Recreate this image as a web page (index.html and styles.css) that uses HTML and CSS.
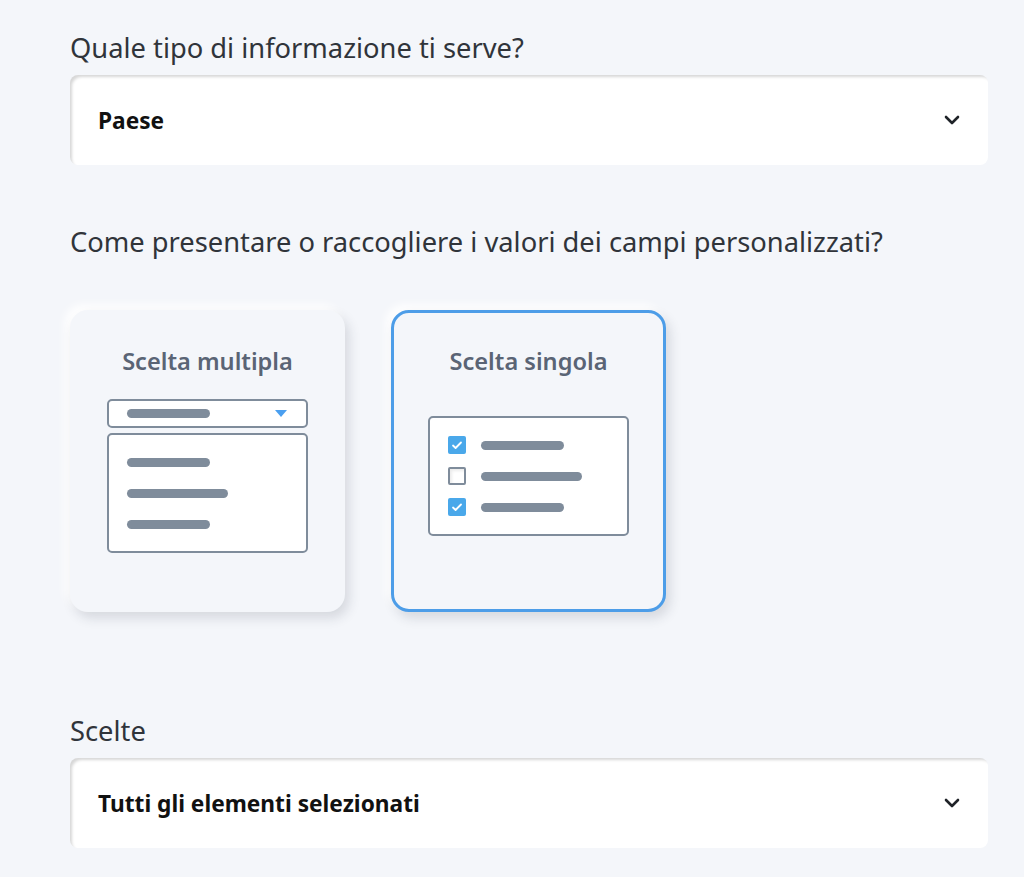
FILE: index.html
```html
<!DOCTYPE html>
<html lang="it">
<head>
    <meta charset="UTF-8">
    <meta name="viewport" content="width=device-width, initial-scale=1.0">
    <title>Campo personalizzato</title>
    <link rel="stylesheet" href="styles.css">
</head>
<body>
    <div class="form">
        <label class="field-label">Quale tipo di informazione ti serve?</label>
        <div class="select">
            <span class="select-value">Paese</span>
            <svg class="chevron" width="16" height="10" viewBox="0 0 16 10"><path d="M2 2l6 6 6-6" fill="none" stroke="#1f2328" stroke-width="2.6" stroke-linecap="round" stroke-linejoin="round"/></svg>
        </div>

        <label class="field-label question">Come presentare o raccogliere i valori dei campi personalizzati?</label>
        <div class="cards">
            <div class="card">
                <h3 class="card-title">Scelta multipla</h3>
                <div class="card-art">
                    <div class="mini-dropdown">
                        <span class="bar short"></span>
                        <span class="caret"></span>
                    </div>
                    <div class="mini-list">
                        <span class="bar short"></span>
                        <span class="bar long"></span>
                        <span class="bar short"></span>
                    </div>
                </div>
            </div>
            <div class="card active">
                <h3 class="card-title">Scelta singola</h3>
                <div class="card-art">
                    <div class="mini-checks">
                        <div class="check-row"><span class="box checked"><svg width="18" height="18" viewBox="0 0 18 18"><path d="M5 9.5l2.6 2.5L13 6.5" fill="none" stroke="#fff" stroke-width="1.8" stroke-linecap="round" stroke-linejoin="round"/></svg></span><span class="bar short"></span></div>
                        <div class="check-row"><span class="box"></span><span class="bar long"></span></div>
                        <div class="check-row"><span class="box checked"><svg width="18" height="18" viewBox="0 0 18 18"><path d="M5 9.5l2.6 2.5L13 6.5" fill="none" stroke="#fff" stroke-width="1.8" stroke-linecap="round" stroke-linejoin="round"/></svg></span><span class="bar short"></span></div>
                    </div>
                </div>
            </div>
        </div>

        <label class="field-label choices">Scelte</label>
        <div class="select">
            <span class="select-value">Tutti gli elementi selezionati</span>
            <svg class="chevron" width="16" height="10" viewBox="0 0 16 10"><path d="M2 2l6 6 6-6" fill="none" stroke="#1f2328" stroke-width="2.6" stroke-linecap="round" stroke-linejoin="round"/></svg>
        </div>
    </div>
</body>
</html>
```

FILE: styles.css
```css
body {
    margin: 0;
    background-color: #f4f6fa;
    font-family: "Noto Sans", "Open Sans", sans-serif;
    color: #2f3237;
}

.form {
    margin-left: 70px;
    width: 918px;
    padding-top: 31px;
}

.field-label {
    display: block;
    font-size: 27.3px;
    line-height: 34px;
    color: #30343a;
    margin-bottom: 10px;
}

.question {
    margin-top: 60px;
    margin-bottom: 51px;
}

.choices {
    margin-top: 102px;
}

.select {
    height: 90px;
    box-sizing: border-box;
    background: #fff;
    border-radius: 8px;
    box-shadow: inset 3px 3px 3px -1px rgba(0, 0, 0, 0.16);
    display: flex;
    align-items: center;
    justify-content: space-between;
    padding: 0 28px 0 28px;
}

.select-value {
    font-size: 22.7px;
    font-weight: bold;
    color: #111;
}

.cards {
    display: flex;
    gap: 46px;
}

.card {
    width: 275px;
    height: 302px;
    box-sizing: border-box;
    border: 3px solid transparent;
    border-radius: 18px;
    background: #f4f6fa;
    box-shadow: 4px 6px 12px rgba(40, 50, 70, 0.15), -5px -5px 10px #fff;
    display: flex;
    flex-direction: column;
    align-items: center;
    padding-top: 33px;
}

.card.active {
    border-color: #4d9de8;
}

.card-title {
    margin: 0;
    font-size: 23.6px;
    line-height: 30px;
    font-weight: 600;
    color: #5a6475;
}

.card-art {
    margin-top: 23px;
    height: 154px;
    display: flex;
    flex-direction: column;
    justify-content: center;
    gap: 5px;
}

.bar {
    display: block;
    height: 9px;
    border-radius: 5px;
    background: #7f8c9b;
}

.bar.short { width: 83px; }
.bar.long { width: 101px; }

.mini-dropdown {
    width: 201px;
    height: 29px;
    box-sizing: border-box;
    border: 2px solid #7f8c9b;
    border-radius: 5px;
    background: #fff;
    display: flex;
    align-items: center;
    justify-content: space-between;
    padding: 0 19px 0 18px;
}

.caret {
    width: 0;
    height: 0;
    border-left: 6px solid transparent;
    border-right: 6px solid transparent;
    border-top: 7px solid #4a9ff0;
}

.mini-list {
    width: 201px;
    height: 120px;
    box-sizing: border-box;
    border: 2px solid #7f8c9b;
    border-radius: 5px;
    background: #fff;
    display: flex;
    flex-direction: column;
    justify-content: center;
    gap: 22px;
    padding-left: 18px;
}

.mini-checks {
    width: 201px;
    height: 120px;
    box-sizing: border-box;
    border: 2px solid #7f8c9b;
    border-radius: 5px;
    background: #fff;
    display: flex;
    flex-direction: column;
    justify-content: center;
    gap: 13px;
    padding-left: 18px;
}

.check-row {
    display: flex;
    align-items: center;
    gap: 15px;
}

.box {
    width: 18px;
    height: 18px;
    box-sizing: border-box;
    border: 2px solid #7f8c9b;
    border-radius: 2px;
    background: #fff;
    box-shadow: inset 2px 2px 3px rgba(0, 0, 0, 0.08);
}

.box.checked {
    border: none;
    background: #4aa8ea;
    box-shadow: none;
}

.box svg {
    display: block;
}
```
